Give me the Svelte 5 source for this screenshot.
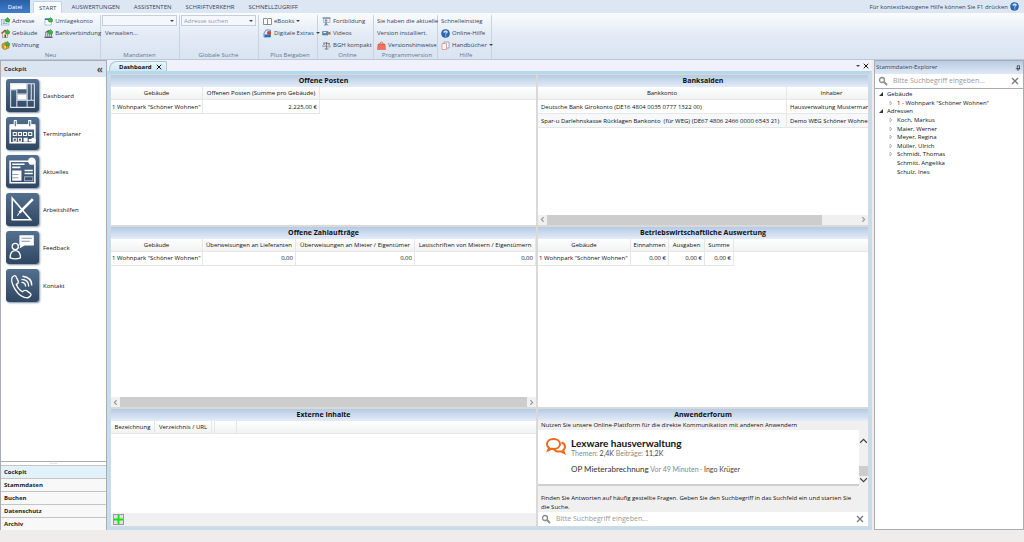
<script>
    const tabs = ["START", "AUSWERTUNGEN", "ASSISTENTEN", "SCHRIFTVERKEHR", "SCHNELLZUGRIFF"];
    let activeTab = $state("START");

    const shortcuts = [
        { icon: "dashboard", label: "Dashboard" },
        { icon: "calendar", label: "Terminplaner" },
        { icon: "news", label: "Aktuelles" },
        { icon: "tools", label: "Arbeitshilfen" },
        { icon: "feedback", label: "Feedback" },
        { icon: "phone", label: "Kontakt" },
    ];

    const sections = ["Cockpit", "Stammdaten", "Buchen", "Datenschutz", "Archiv"];
    let section = $state("Cockpit");

    const tree = [
        { label: "Gebäude", open: true },
        { label: '1 - Wohnpark "Schöner Wohnen"', child: true, more: true },
        { label: "Adressen", open: true },
        { label: "Koch, Markus", child: true, more: true },
        { label: "Maier, Werner", child: true, more: true },
        { label: "Meyer, Regina", child: true, more: true },
        { label: "Müller, Ulrich", child: true, more: true },
        { label: "Schmidt, Thomas", child: true, more: true },
        { label: "Schmitt, Angelika", child: true },
        { label: "Schulz, Ines", child: true },
    ];

    const building = '1 Wohnpark "Schöner Wohnen"';

    const openItems = {
        cols: [
            { name: "Gebäude", width: 92 },
            { name: "Offenen Posten (Summe pro Gebäude)", width: 117, num: true },
        ],
        rows: [[building, "2.225,00 €"]],
    };
    const balances = {
        wide: 339,
        cols: [
            { name: "Bankkonto", width: 249 },
            { name: "Inhaber", width: 90 },
        ],
        rows: [
            ["Deutsche Bank Girokonto (DE16 4804 0035 0777 1322 00)", "Hausverwaltung Mustermann"],
            ["Spar-u Darlehnskasse Rücklagen Bankonto\u00a0 (für WEG) (DE67 4806 2466 0000 6543 21)", "Demo WEG Schöner Wohnen"],
        ],
    };
    const payments = {
        cols: [
            { name: "Gebäude", width: 92 },
            { name: "Überweisungen an Lieferanten", width: 93, num: true },
            { name: "Überweisungen an Mieter / Eigentümer", width: 119, num: true },
            { name: "Lastschriften von Mietern / Eigentümern", width: 121, num: true },
        ],
        rows: [[building, "0,00", "0,00", "0,00"]],
    };
    const evaluation = {
        cols: [
            { name: "Gebäude", width: 93 },
            { name: "Einnahmen", width: 38, num: true },
            { name: "Ausgaben", width: 36, num: true },
            { name: "Summe", width: 29, num: true },
        ],
        rows: [[building, "0,00 €", "0,00 €", "0,00 €"]],
    };
    const external = {
        cols: [
            { name: "Bezeichnung", width: 44 },
            { name: "Verzeichnis / URL", width: 57 },
            { name: "", width: 3 },
            { name: "", width: 22 },
        ],
        rows: [],
    };
</script>

{#snippet icon(name)}
    <svg class="icon" viewBox="0 0 18 18" aria-hidden="true">
        {#if name == "address"}
            <rect x="1" y="5" width="15" height="11" fill="#f4f8fc" stroke="#6d8db5" />
            <path d="M3 8h5M3 10.500h5M3 13h10" stroke="#7f9cc0" stroke-width="1.500" />
            {@render plus()}
        {:else if name == "allocation"}
            <rect x="2" y="3" width="13" height="13" fill="#fff" stroke="#6d8db5" />
            <path d="M2 4.500h13" stroke="#2f74c4" stroke-width="3" />
            {@render plus()}
        {:else if name == "building"}
            <path d="M1 9l7-6 7 6" fill="none" stroke="#a4442a" stroke-width="3" />
            <path d="M3 9l5-4 5 4v8H3z" fill="#f6ead6" stroke="#8a5b3c" />
            <path d="M7 11h3v6H7z" fill="#5c4635" />
            {@render plus()}
        {:else if name == "bank"}
            <path d="M1 7l8-5 8 5zM1 15h16v3H1z" fill="#5b5f68" />
            <path d="M3.500 7v8M7.500 7v8M11.500 7v8M15 7v8" stroke="#777b84" stroke-width="2" />
            {@render plus()}
        {:else if name == "flat"}
            <path d="M2 6l8-4 6 3v9l-8 3-6-3z" fill="#e89a1c" stroke="#9a6412" />
            <path d="M6 8l5-2v9l-5 2z" fill="#ffd75e" stroke="#a66c10" />
            {@render plus()}
        {:else if name == "book"}
            <path d="M1 3h7l1 1 1-1h7v12h-7l-1 1-1-1H1z" fill="#fafafa" stroke="#6c6c6c" stroke-width="1.500" />
            <path d="M9 4v12" stroke="#6c6c6c" stroke-width="1.500" />
        {:else if name == "extras"}
            <path d="M2 8l4-6h9v14H2z" fill="#dce9f6" stroke="#3f77b4" stroke-width="1.500" />
            <path d="M3 11h12v5H3z" fill="#2870b8" />
            <circle cx="12" cy="8" r="4" fill="#d8412f" />
        {:else if name == "training"}
            <path d="M3 2h13v9H3z" fill="#e6f1fb" stroke="#5b8bbd" />
            <path d="M1 2h16" stroke="#4a78aa" stroke-width="2" />
            <circle cx="8" cy="7" r="2.500" fill="#d9783f" />
            <path d="M8 10v7M5 17l3-4 4 4" stroke="#4b79ad" stroke-width="2" fill="none" />
        {:else if name == "video"}
            <path d="M1 5h11v7H1z" fill="#5792cb" stroke="#44617f" />
            <path d="M12 7l5-2v7l-5-2z" fill="#a9744c" />
            <path d="M3 7h5" stroke="#eaf4fc" stroke-width="2" />
        {:else if name == "law"}
            <path d="M9 2v14M5 16h8M2 4l14 1" stroke="#59616d" stroke-width="1.500" fill="none" />
            <path d="M1 11l3-6 3 6zM11 12l3-6 3 6z" fill="#dde2e8" stroke="#6b727c" />
        {:else if name == "notes"}
            <path d="M2 6h14l1 11H1z" fill="#ee735c" stroke="#d4513c" />
            <path d="M6 8V4q3-4 6 0v4" fill="none" stroke="#c8523f" stroke-width="1.500" />
        {:else if name == "help"}
            <circle cx="9" cy="9" r="8" fill="#2d68b8" stroke="#1a4688" />
            <path d="M3 6q6-6 12 0-6 3-12 0z" fill="#8db7e6" />
            <path d="M6.500 7q0-3 3-3t2.500 2.500q0 1.500-2.500 3v1.500M9.500 13v2" fill="none" stroke="#fff" stroke-width="1.800" />
        {:else if name == "manual"}
            <path d="M6 2h10v12H6z" fill="#fff" stroke="#6d94c4" stroke-width="1.500" />
            <path d="M2 5h9v12H2z" fill="#fff8f4" stroke="#e08a72" stroke-width="1.500" />
        {/if}
    </svg>
{/snippet}

{#snippet plus()}
    <path d="M8 6l5-5 5 5-2 4h-6z" fill="#3fb53a" stroke="#26862b" />
{/snippet}

{#snippet tile(name)}
    <svg class="tile" viewBox="0 0 32 32" aria-hidden="true">
        {#if name == "dashboard"}
            <path d="M4 4h16v6H4zM11 15h9v5h-9z" fill="#fff" />
            <path
                d="M4.500 4.500h23v23h-23zM10.500 10v17M20.500 5v22M4 10.500h6M10 14.500h10M10 20.500h17M24.500 5v15"
                fill="none"
                stroke="#dfe6ed"
            />
        {:else if name == "calendar"}
            <path d="M4 8h24v17H4z" fill="none" stroke="#fff" stroke-width="1.500" />
            <path d="M4 7h24v5H4z" fill="#fff" />
            <path d="M9 3v6M23 3v6" stroke="#fff" stroke-width="3" />
            <path d="M9 4v5M23 4v5" stroke="#456080" />
            <path d="M7 15h3v3H7zM12 15h3v3h-3zM17 15h3v3h-3zM22 15h3v3h-3zM7 20.500h3v3H7zM12 20.500h3v3h-3z" fill="none" stroke="#fff" />
            <path d="M17 20h4v4h-4z" fill="#fff" />
            <path d="M22 22.500h7M26 20v5" stroke="#fff" stroke-width="2.500" />
        {:else if name == "news"}
            <path d="M4 6h24v21H4z" fill="none" stroke="#fff" stroke-width="1.500" />
            <circle cx="25" cy="6" r="3.500" fill="#fff" />
            <path d="M6 9h12M6 12h8M18 15h8M18 18h8" stroke="#fff" stroke-width="1.500" />
            <path d="M6 15h9v10H6z" fill="#fff" />
            <path d="M18 21h8v4h-8z" fill="#3a5370" stroke="#9eb0c3" />
            <path d="M6 19h6M6 22h6" stroke="#8ea1b6" />
        {:else if name == "tools"}
            <path d="M6 5v21h18z" fill="none" stroke="#fff" stroke-width="1.500" />
            <path d="M26 6L13 19" stroke="#fff" stroke-width="2.500" />
            <path d="M14 18l-3 4" stroke="#fff" />
        {:else if name == "feedback"}
            <path d="M13 4h14v10h-9l-5 3 1-3h-1z" fill="#fff" />
            <path d="M15 7h10M15 10h8" stroke="#8194aa" />
            <circle cx="9" cy="15" r="3" fill="none" stroke="#fff" stroke-width="1.300" />
            <path d="M4 26q0-7 5-7t5 7q-5 2-10 0z" fill="none" stroke="#fff" stroke-width="1.300" />
        {:else}
            <path
                d="M6 8q3-3 4 0l2 4q0 2-2 3 2 5 6 7 2-2 4-1l4 3q1 2-3 4-7 0-12-8-5-8-3-12z"
                fill="none"
                stroke="#fff"
                stroke-width="1.300"
            />
            <path d="M15 13q4 0 4 4M15 10q7 0 7 7M16 7q9 1 9 9" fill="none" stroke="#fff" stroke-width="1.300" />
        {/if}
    </svg>
{/snippet}

{#snippet lens()}
    <svg class="lens" viewBox="0 0 10 10" aria-hidden="true">
        <circle cx="4" cy="4" r="2.500" fill="none" stroke="#8a8a8a" stroke-width="1.300" />
        <path d="M6 6l3 3" stroke="#8a8a8a" stroke-width="1.800" />
    </svg>
{/snippet}

{#snippet cross()}
    <svg class="cross" viewBox="0 0 8 8" aria-hidden="true">
        <path d="M1 1l6 6M7 1L1 7" stroke="currentColor" stroke-width="1.300" />
    </svg>
{/snippet}

{#snippet command(name, label, menu)}
    <button class="command">
        {#if name}{@render icon(name)}{/if}
        <span>{label}</span>
        {#if menu}<i class="caret"></i>{/if}
    </button>
{/snippet}

{#snippet search(label)}
    <div class="search">
        {@render lens()}
        <input type="text" aria-label={label} placeholder="Bitte Suchbegriff eingeben..." />
        <button aria-label="Suche leeren">{@render cross()}</button>
    </div>
{/snippet}

{#snippet table(data)}
    <div class="table">
        <table style:min-width={data.wide ? data.wide + "px" : null}>
            <colgroup>
                {#each data.cols as col}
                    <col style:width="{col.width}px" />
                {/each}
                {#if !data.wide}<col />{/if}
            </colgroup>
            <thead>
                <tr>
                    {#each data.cols as col}
                        <th>{col.name}</th>
                    {/each}
                    {#if !data.wide}<th class="rest"></th>{/if}
                </tr>
            </thead>
            <tbody>
                {#each data.rows as row}
                    <tr>
                        {#each row as cell, i}
                            <td class:num={data.cols[i].num}>{cell}</td>
                        {/each}
                    </tr>
                {/each}
            </tbody>
        </table>
    </div>
{/snippet}

{#snippet scrollbar(size)}
    <div class="scrollbar">
        <svg viewBox="0 0 8 8"><path d="M5 2L3 4l2 2" /></svg>
        <div class="track"><div class="thumb" style:width="{size}%"></div></div>
        <svg viewBox="0 0 8 8"><path d="M3 2l2 2-2 2" /></svg>
    </div>
{/snippet}

<div class="app">
    <nav class="tabs">
        <button class="file">Datei</button>
        {#each tabs as tab}
            <button class="tab" class:active={tab == activeTab} onclick={() => (activeTab = tab)}>{tab}</button>
        {/each}
        <span class="hint">Für kontextbezogene Hilfe können Sie F1 drücken {@render icon("help")}</span>
    </nav>

    <header class="ribbon">
        <section class="group new">
            <div class="columns">
                <div>
                    {@render command("address", "Adresse")}
                    {@render command("building", "Gebäude")}
                    {@render command("flat", "Wohnung")}
                </div>
                <div>
                    {@render command("allocation", "Umlagekonto")}
                    {@render command("bank", "Bankverbindung")}
                </div>
            </div>
            <h2>Neu</h2>
        </section>
        <section class="group combo-group">
            <div class="combo">
                <select aria-label="Mandant"><option></option></select>
                <i class="caret"></i>
            </div>
            {@render command("", "Verwalten...")}
            <h2>Mandanten</h2>
        </section>
        <section class="group combo-group">
            <div class="combo">
                <input type="text" aria-label="Adresse suchen" placeholder="Adresse suchen" />
                <i class="caret"></i>
            </div>
            <h2>Globale Suche</h2>
        </section>
        <section class="group extras">
            {@render command("book", "eBooks", true)}
            {@render command("extras", "Digitale Extras", true)}
            <h2>Plus Beigaben</h2>
        </section>
        <section class="group online">
            {@render command("training", "Fortbildung")}
            {@render command("video", "Videos")}
            {@render command("law", "BGH kompakt")}
            <h2>Online</h2>
        </section>
        <section class="group version">
            <p>Sie haben die aktuelle<br />Version installiert.</p>
            {@render command("notes", "Versionshinweise")}
            <h2>Programmversion</h2>
        </section>
        <section class="group help">
            {@render command("", "Schnelleinstieg")}
            {@render command("help", "Online-Hilfe")}
            {@render command("manual", "Handbücher", true)}
            <h2>Hilfe</h2>
        </section>
    </header>

    <main>
        <aside class="cockpit">
            <h2>Cockpit <button aria-label="Einklappen">«</button></h2>
            <div class="shortcuts">
                {#each shortcuts as item}
                    <button>{@render tile(item.icon)}<span>{item.label}</span></button>
                {/each}
            </div>
            <div class="grip">·····</div>
            {#each sections as name}
                <button class="section" class:active={name == section} onclick={() => (section = name)}>{name}</button>
            {/each}
        </aside>

        <div class="workspace">
            <div class="documents">
                <div class="document">Dashboard <button aria-label="Schließen">{@render cross()}</button></div>
                <div class="window">
                    <button aria-label="Fensterliste"><i class="caret"></i></button>
                    <button aria-label="Alle schließen">{@render cross()}</button>
                </div>
            </div>
            <div class="frame">
                <section class="panel">
                    <h3>Offene Posten</h3>
                    {@render table(openItems)}
                </section>
                <section class="panel">
                    <h3>Banksalden</h3>
                    {@render table(balances)}
                    {@render scrollbar(88)}
                </section>
                <section class="panel">
                    <h3>Offene Zahlaufträge</h3>
                    {@render table(payments)}
                    {@render scrollbar(100)}
                </section>
                <section class="panel">
                    <h3>Betriebswirtschaftliche Auswertung</h3>
                    {@render table(evaluation)}
                </section>
                <section class="panel">
                    <h3>Externe Inhalte</h3>
                    {@render table(external)}
                    <div class="actions">
                        <button aria-label="Hinzufügen">
                            <svg viewBox="0 0 10 10"><path d="M5 0v10M0 5h10" stroke="#0be80b" stroke-width="2" /></svg>
                        </button>
                    </div>
                </section>
                <section class="panel forum">
                    <h3>Anwenderforum</h3>
                    <p>Nutzen Sie unsere Online-Plattform für die direkte Kommunikation mit anderen Anwendern</p>
                    <div class="feed">
                        <article>
                            <svg class="bubbles" viewBox="0 0 20 16" aria-hidden="true">
                                <path
                                    d="M7.500 1C3.500 1 1 3.200 1 6c0 1.600.8 2.900 2 3.800L2 12.500l3.300-1.700c.7.200 1.500.2 2.200.2C11.500 11 14 8.800 14 6s-2.500-5-6.500-5z"
                                />
                                <path d="M15.500 4.500C18 5.200 19 7 19 8.800c0 1.500-.7 2.600-1.800 3.500l1 2.700-3.400-1.600c-3.300.6-5.600-.4-6.800-2.200" />
                            </svg>
                            <div>
                                <h4>Lexware hausverwaltung</h4>
                                <div class="stats">Themen: <b>2,4K</b> Beiträge: <b>11,2K</b></div>
                                <div class="post">
                                    <a href="#post">OP Mieterabrechnung</a>
                                    <span>Vor 49 Minuten · <b>Ingo Krüger</b></span>
                                </div>
                            </div>
                        </article>
                        <div class="feed-scroll">
                            <svg viewBox="0 0 8 8"><path d="M1 6l3-3 3 3" /></svg>
                            <div></div>
                            <svg viewBox="0 0 8 8"><path d="M1 2l3 3 3-3" /></svg>
                        </div>
                    </div>
                    <p class="faq">
                        Finden Sie Antworten auf häufig gestellte Fragen. Geben Sie den Suchbegriff in das Suchfeld ein und starten Sie
                        die Suche.
                    </p>
                    {@render search("Fragen durchsuchen")}
                </section>
            </div>
        </div>

        <aside class="explorer">
            <h2>
                Stammdaten-Explorer
                <button aria-label="Anheften">
                    <svg viewBox="0 0 8 8"><path d="M3 1h3v4H3zM1 5h6M4 5v3" fill="none" stroke="#333" /></svg>
                </button>
            </h2>
            {@render search("Stammdaten durchsuchen")}
            <ul>
                {#each tree as node}
                    <li class:child={node.child}>
                        <svg viewBox="0 0 6 6" aria-hidden="true">
                            {#if node.open}
                                <path d="M5 1v4H1z" fill="#333" />
                            {:else if node.more}
                                <path d="M2 1l2 2-2 2z" fill="#fff" stroke="#999" stroke-width=".6" />
                            {/if}
                        </svg>
                        {node.label}
                    </li>
                {/each}
            </ul>
        </aside>
    </main>
</div>

<style>
    :global(body) {
        margin: 0;
        background: #f0ecec;
    }
    .app {
        display: flex;
        flex-direction: column;
        min-height: 100vh;
        box-sizing: border-box;
        padding-bottom: 12px;
        font: 6px/12px "Open Sans", "Noto Sans", sans-serif;
        color: #111;
        white-space: nowrap;
        overflow: hidden;
    }
    h2,
    h3,
    h4,
    p,
    ul {
        margin: 0;
        padding: 0;
        font-size: inherit;
        font-weight: normal;
    }
    button,
    input,
    select {
        font: inherit;
        color: inherit;
        background: none;
        border: none;
        margin: 0;
        padding: 0;
        outline: none;
        min-width: 0;
    }
    button,
    select {
        cursor: pointer;
    }
    svg {
        display: block;
        flex: none;
    }
    .icon {
        width: 9px;
        height: 9px;
    }
    .cross {
        width: 6px;
        height: 6px;
    }
    .caret {
        display: block;
        flex: none;
        border: 2px solid transparent;
        border-top-color: #445;
        border-bottom: none;
    }

    /* ribbon */
    .tabs {
        display: flex;
        height: 13px;
        background: #dde7f3;
        color: #34445c;
    }
    .file {
        width: 30px;
        margin-right: 3px;
        color: #fff;
        background: linear-gradient(#2c5ea8, #3f7fcb);
    }
    .tab {
        padding: 1px 7px 0;
    }
    .tab.active {
        margin-top: 1px;
        padding: 0 5px;
        background: #fafcfe;
        border: 1px solid #c5d5e8;
        border-bottom: none;
        border-radius: 2px 2px 0 0;
    }
    .tab.active + .tab {
        padding-left: 9px;
    }
    .hint {
        display: flex;
        align-items: center;
        gap: 2px;
        margin-left: auto;
        padding-right: 5px;
    }
    .ribbon {
        display: flex;
        height: 47px;
        box-sizing: border-box;
        padding-top: 2px;
        background: linear-gradient(#fafcfe, #e2eaf5 50%, #d9e4f2);
        border-bottom: 1px solid #bcc8d8;
        color: #34445c;
    }
    .group {
        display: flex;
        flex-direction: column;
        box-sizing: border-box;
        padding-left: 4px;
        border-right: 1px solid #c8d3e2;
    }
    .group h2 {
        margin-top: auto;
        line-height: 8px;
        text-align: center;
        color: #68768c;
    }
    .new {
        width: 101px;
        padding-left: 1px;
    }
    .combo-group {
        width: 79px;
        padding: 0 2px 0 1px;
    }
    .combo-group .command {
        padding-left: 3px;
    }
    .extras {
        width: 59px;
    }
    .online {
        width: 56px;
    }
    .version {
        width: 64px;
        padding-left: 3px;
    }
    .help {
        width: 54px;
        padding-left: 3px;
    }
    .columns {
        display: flex;
        gap: 5px;
    }
    .command {
        display: flex;
        align-items: center;
        gap: 2px;
        height: 12px;
    }
    .combo {
        display: flex;
        align-items: center;
        height: 11px;
        box-sizing: border-box;
        margin-bottom: 1px;
        padding: 0 2px;
        background: #f4f8fc;
        border: 1px solid #c3cfdf;
    }
    .combo select,
    .combo input {
        flex: 1;
        appearance: none;
    }
    .combo input::placeholder {
        color: #949aa3;
        opacity: 1;
    }

    /* body */
    main {
        display: flex;
        flex: 1;
    }
    .cockpit {
        display: flex;
        flex-direction: column;
        width: 107px;
        box-sizing: border-box;
        background: #fff;
        border: 1px solid #a9adb3;
        border-width: 1px 1px 0;
    }
    .cockpit h2 {
        display: flex;
        justify-content: space-between;
        padding: 1px 3px;
        line-height: 14px;
        font-weight: bold;
        color: #333;
        background: #dbe5f2;
    }
    .cockpit h2 button {
        font-size: 10px;
        line-height: 12px;
        color: #555;
    }
    .shortcuts {
        display: flex;
        flex-direction: column;
        flex: 1;
        gap: 5px;
        padding: 2px 5px;
        border-bottom: 1px solid #a9adb3;
    }
    .shortcuts button {
        display: flex;
        align-items: center;
        gap: 4px;
    }
    .tile {
        width: 33px;
        height: 33px;
        border-radius: 3px;
        background: linear-gradient(#54708f, #2f4661);
        box-shadow: 1px 1px 2px #7d8fa6;
    }
    .grip {
        height: 3px;
        line-height: 3px;
        text-align: center;
        color: #888;
    }
    .section {
        height: 13px;
        padding: 0 3px;
        text-align: left;
        line-height: 12px;
        font-weight: bold;
        color: #222;
        background: #f8f8f8;
        border-top: 1px solid #c4c4c4;
    }
    .section.active {
        background: #e3f1fa;
    }
    .workspace {
        display: flex;
        flex-direction: column;
        flex: 1;
        min-width: 0;
        background: #f0f1fa;
    }
    .documents {
        display: flex;
        justify-content: space-between;
        height: 11px;
        line-height: 10px;
    }
    .document {
        display: flex;
        align-items: center;
        gap: 4px;
        margin: 1px 0 0 2px;
        padding: 0 4px 0 9px;
        font-weight: bold;
        background: linear-gradient(#e9f5fc, #cfe8f6);
        border: 1px solid #a5c8de;
        border-bottom: none;
        border-radius: 8px 2px 0 0;
    }
    .window {
        display: flex;
        align-items: center;
        gap: 3px;
        padding-right: 3px;
    }
    .frame {
        display: grid;
        flex: 1;
        grid-template-columns: 425fr 330fr;
        grid-template-rows: 150fr 181fr 117fr;
        gap: 2px;
        padding: 1px;
        background: #d9d9d9;
        border: 3px solid #c3dfef;
        border-top-color: #b5d8ea;
    }
    .panel {
        display: flex;
        flex-direction: column;
        min-width: 0;
        min-height: 0;
        background: #fff;
        overflow: hidden;
    }
    .panel h3 {
        font-size: 7px;
        line-height: 12px;
        text-align: center;
        font-weight: bold;
        background: linear-gradient(#b5cae4, #e4ecf9);
    }
    .table {
        flex: 1;
        overflow: hidden;
    }
    table {
        width: 100%;
        table-layout: fixed;
        border-collapse: separate;
        border-spacing: 0;
    }
    th,
    td {
        box-sizing: border-box;
        height: 14px;
        padding: 0 1px;
        font-weight: normal;
        border: 1px solid #e6e6e6;
        border-width: 0 1px 1px 0;
    }
    th {
        height: 13px;
        background: linear-gradient(#fff, #f1f2f3);
    }
    th.rest {
        border-right: none;
    }
    td.num {
        padding-right: 2px;
        text-align: right;
    }
    tr:nth-child(even) td {
        background: #f6f8f9;
    }
    td + td:not(.num),
    tr:nth-child(n) td:first-child:not(:has(+ .num)) {
        padding-left: 3px;
    }
    .scrollbar {
        display: flex;
        align-items: center;
        height: 10px;
        background: #f0f0f0;
    }
    .scrollbar svg {
        width: 9px;
        height: 9px;
    }
    .scrollbar path,
    .feed-scroll path {
        fill: none;
        stroke: #999;
    }
    .track {
        flex: 1;
    }
    .thumb {
        height: 10px;
        background: #cdcdcd;
    }
    .actions {
        padding: 1px 2px;
        background: #f0f0f0;
    }
    .actions button {
        display: block;
        width: 11px;
        height: 11px;
        border: 1px solid #999;
        background: #e5dfe5;
    }
    .panel.forum {
        background: #f0f0f0;
    }
    .forum p {
        padding: 0 3px;
        line-height: 9px;
    }
    .feed {
        display: flex;
        flex: 1;
    }
    article {
        display: flex;
        gap: 5px;
        flex: 1;
        padding: 7px 8px 0;
        font-family: Lato, "Open Sans", sans-serif;
        font-size: 7px;
        background: #fff;
        border-bottom: 2px solid #cfcfcf;
    }
    .bubbles {
        width: 20px;
        height: 18px;
        fill: none;
        stroke: #ec6a1c;
        stroke-width: 2;
    }
    h4 {
        font-size: 10px;
        font-weight: bold;
    }
    .stats,
    .post {
        line-height: 9px;
        color: #888;
    }
    .stats b,
    .post b {
        font-weight: normal;
        color: #444;
    }
    .post {
        padding-top: 7px;
    }
    .post a {
        font-size: 8px;
        color: #333;
        text-decoration: none;
    }
    .feed-scroll {
        display: flex;
        flex-direction: column;
        justify-content: space-between;
        width: 9px;
        padding: 6px 0 1px;
    }
    .feed-scroll svg {
        width: 9px;
        height: 9px;
    }
    .feed-scroll path {
        stroke: #444;
    }
    .feed-scroll div {
        height: 10px;
        margin-top: auto;
        background: #cdcdcd;
    }
    .forum .faq {
        padding: 8px 9px 0 3px;
        white-space: normal;
    }
    .search {
        display: flex;
        align-items: center;
        gap: 5px;
        height: 14px;
        padding: 0 4px 0 3px;
        font-size: 7px;
        color: #777;
        background: #fff;
    }
    .search input {
        flex: 1;
    }
    .search input::placeholder {
        color: #999;
        opacity: 1;
    }
    .lens {
        width: 10px;
        height: 10px;
    }
    .search .cross {
        width: 8px;
        height: 8px;
    }
    .explorer {
        width: 150px;
        box-sizing: border-box;
        margin-left: 2px;
        background: #fff;
        border: 1px solid #a9adb3;
    }
    .explorer h2 {
        display: flex;
        justify-content: space-between;
        padding: 0 2px 0 1px;
        line-height: 13px;
        color: #34445c;
        background: linear-gradient(#b9cbe3, #dfe9f6);
    }
    .explorer h2 svg {
        width: 6px;
        height: 6px;
    }
    .explorer ul {
        display: grid;
        grid-auto-rows: 1fr;
        height: 86px;
        padding-top: 1px;
        list-style: none;
        border-top: 1px solid #a9adb3;
    }
    li {
        display: flex;
        align-items: center;
        gap: 3px;
        padding-left: 3px;
        line-height: 8px;
    }
    li.child {
        padding-left: 13px;
    }
    li svg {
        width: 6px;
        height: 6px;
    }
</style>
